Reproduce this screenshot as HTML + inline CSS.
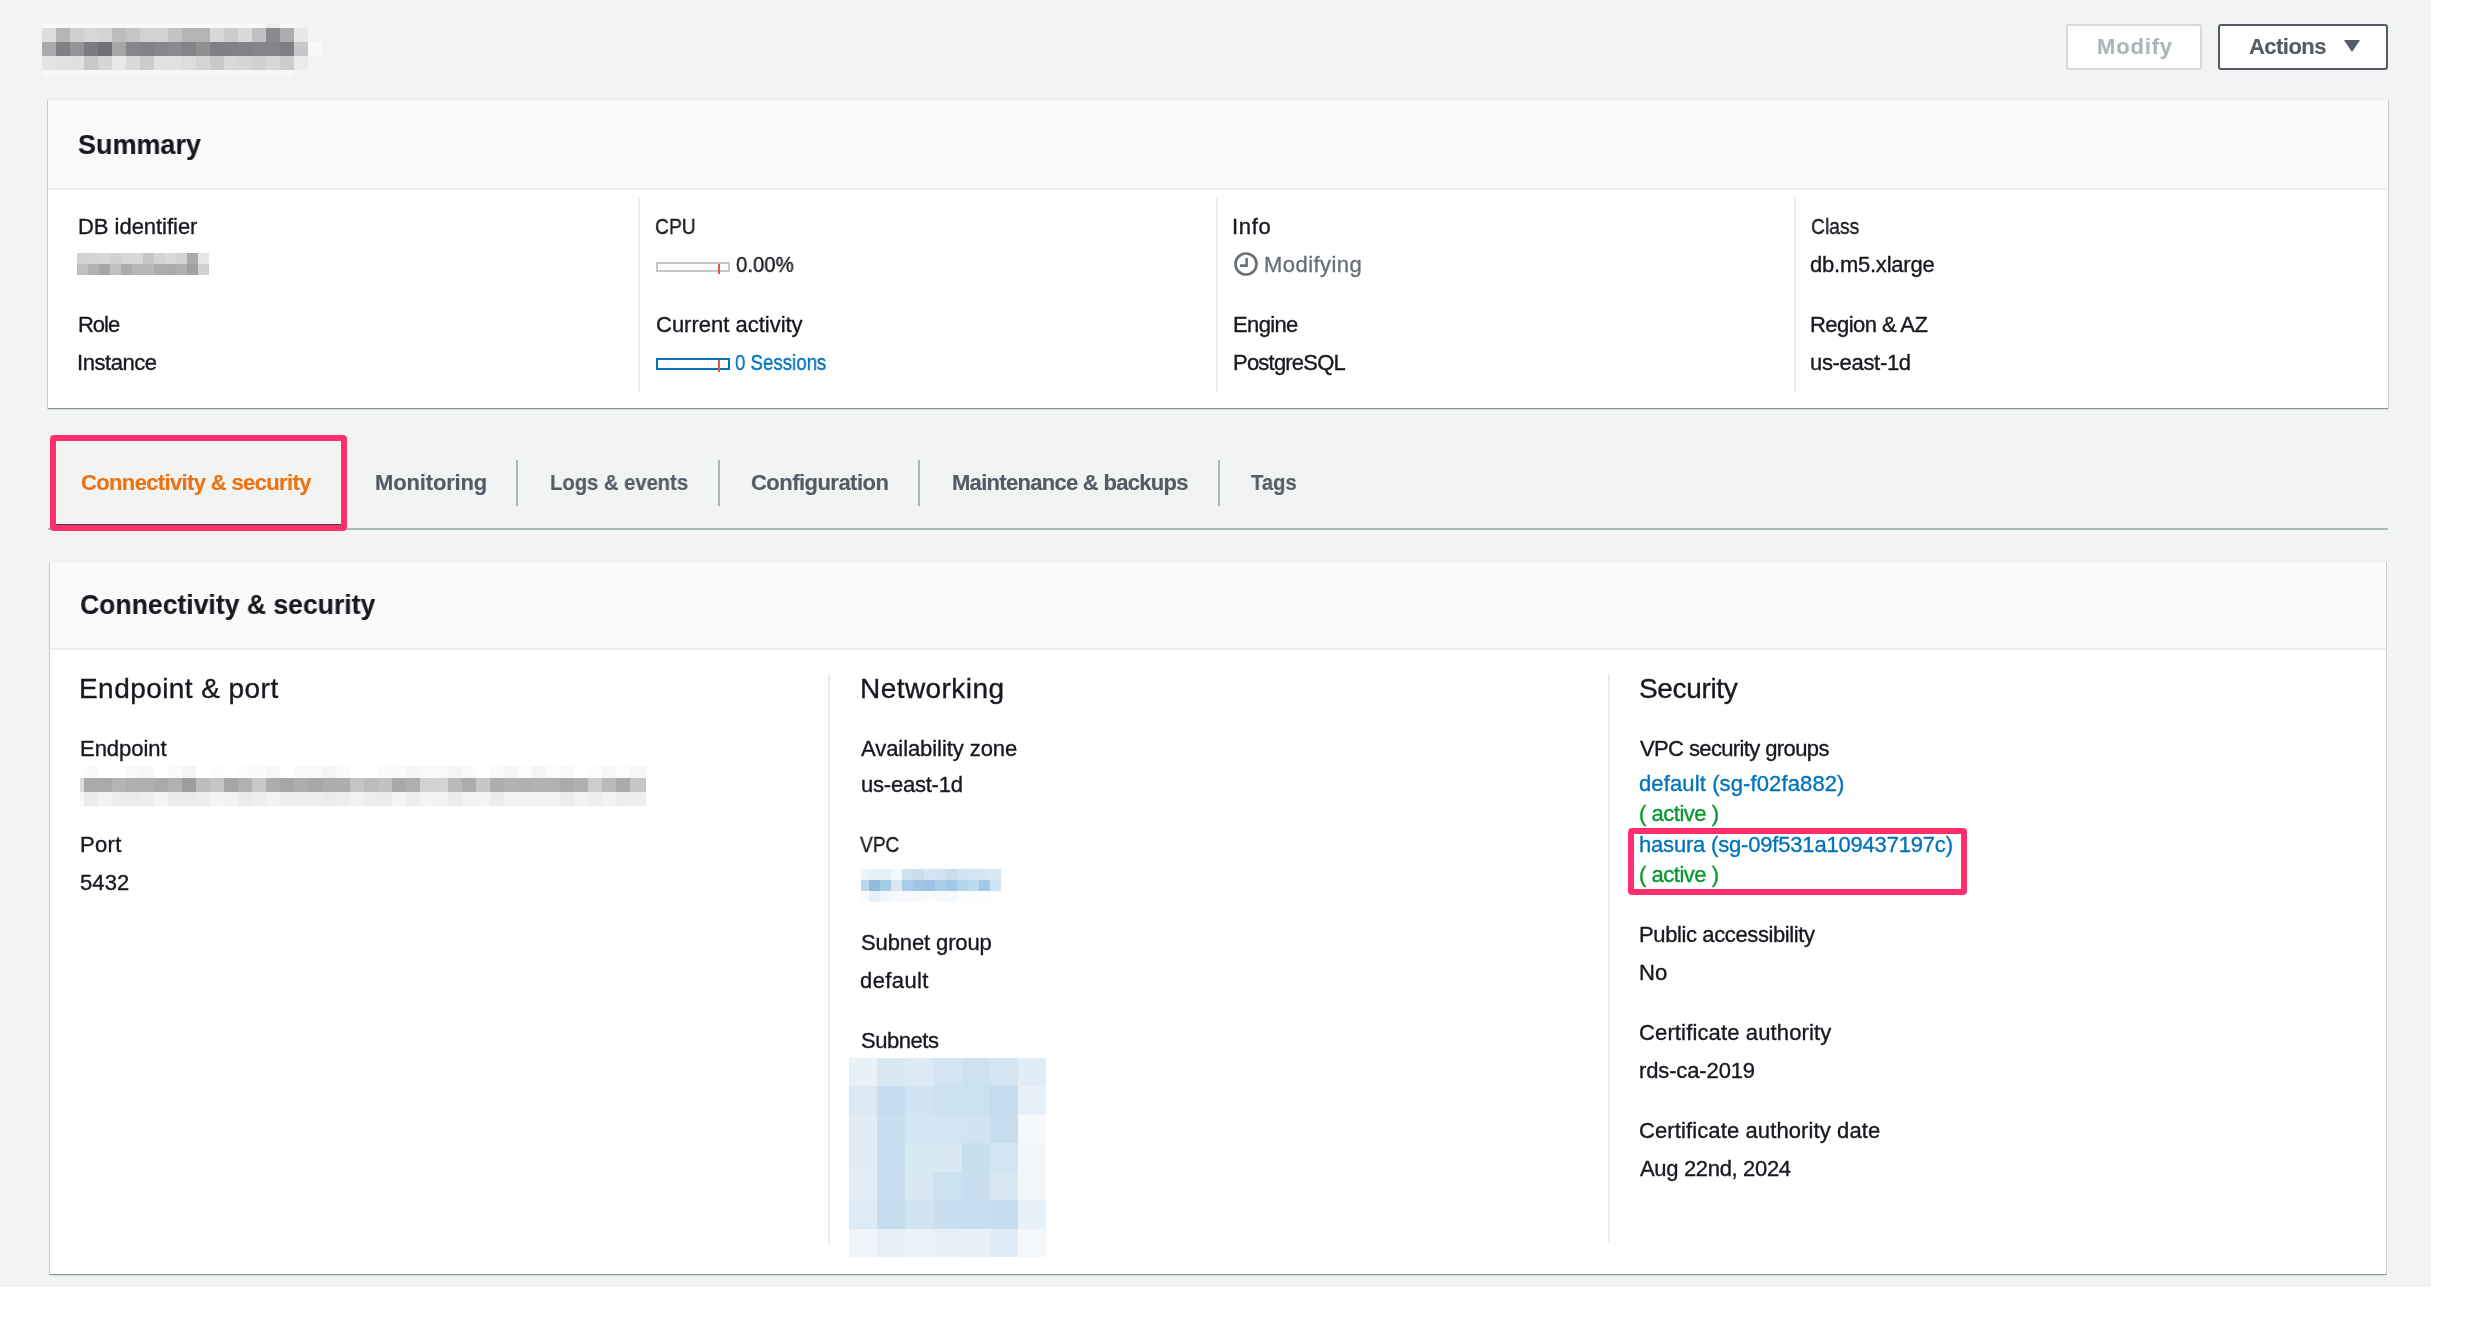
<!DOCTYPE html>
<html><head><meta charset="utf-8"><style>
html,body{margin:0;padding:0;width:2472px;height:1328px;overflow:hidden;background:#fff}
.t{position:absolute;font-family:"Liberation Sans",sans-serif;white-space:nowrap;line-height:90px;will-change:transform}
.a{position:absolute}
</style></head><body>

<div class="a" style="left:0;top:0;width:2431px;height:1287px;background:#f2f3f3"></div>
<!-- buttons -->
<div class="a" style="left:2066px;top:24px;width:132px;height:42px;border:2px solid #d5dbdb;border-radius:3px;background:#fff"></div>
<div class="a" style="left:2218px;top:24px;width:166px;height:42px;border:2px solid #545b64;border-radius:3px;background:#fff"></div>
<svg class="a" style="left:0;top:0" width="2472" height="1328"><polygon points="2344,40 2360,40 2352,52" fill="#545b64"/></svg>
<!-- summary panel -->
<div class="a" style="left:48px;top:99px;width:2340px;height:309px;background:#fff"></div>
<div class="a" style="left:47px;top:100px;width:1px;height:309px;background:#c5cacb"></div>
<div class="a" style="left:2388px;top:100px;width:1px;height:309px;background:#c5cacb"></div>
<div class="a" style="left:48px;top:408px;width:2340px;height:1px;background:#879596"></div>
<div class="a" style="left:48px;top:409px;width:2340px;height:1px;background:#dde0e1"></div>
<div class="a" style="left:48px;top:99px;width:2340px;height:1px;background:#eaeded"></div>
<div class="a" style="left:48px;top:100px;width:2340px;height:88px;background:#fafafa"></div>
<div class="a" style="left:48px;top:188px;width:2340px;height:2px;background:#eaeded"></div>
<div class="a" style="left:638px;top:198px;width:2px;height:194px;background:#eaeded"></div>
<div class="a" style="left:1216px;top:198px;width:2px;height:194px;background:#eaeded"></div>
<div class="a" style="left:1794px;top:198px;width:2px;height:194px;background:#eaeded"></div>
<!-- bars -->
<div class="a" style="left:656px;top:262px;width:70px;height:6px;border:2px solid #c6c8c8"></div>
<div class="a" style="left:718px;top:264px;width:2px;height:10px;background:#e0574f"></div>
<div class="a" style="left:656px;top:358px;width:70px;height:8px;border:2px solid #0073bb"></div>
<div class="a" style="left:718px;top:360px;width:2px;height:12px;background:#e0574f"></div>
<!-- clock icon -->
<svg class="a" style="left:1232px;top:250px" width="28" height="28"><circle cx="14" cy="14" r="10.5" fill="none" stroke="#687078" stroke-width="2.7"/><path d="M14.6 8 V15.6 H8" fill="none" stroke="#687078" stroke-width="2.6"/></svg>
<!-- tabs -->
<div class="a" style="left:48px;top:528px;width:2340px;height:2px;background:#aab7b8"></div>
<div class="a" style="left:516px;top:460px;width:2px;height:46px;background:#aab7b8"></div>
<div class="a" style="left:718px;top:460px;width:2px;height:46px;background:#aab7b8"></div>
<div class="a" style="left:918px;top:460px;width:2px;height:46px;background:#aab7b8"></div>
<div class="a" style="left:1218px;top:460px;width:2px;height:46px;background:#aab7b8"></div>
<!-- connectivity panel -->
<div class="a" style="left:50px;top:561px;width:2336px;height:713px;background:#fff"></div>
<div class="a" style="left:49px;top:562px;width:1px;height:713px;background:#c5cacb"></div>
<div class="a" style="left:2386px;top:562px;width:1px;height:713px;background:#c5cacb"></div>
<div class="a" style="left:50px;top:1274px;width:2336px;height:1px;background:#879596"></div>
<div class="a" style="left:50px;top:1275px;width:2336px;height:1px;background:#dde0e1"></div>
<div class="a" style="left:50px;top:561px;width:2336px;height:1px;background:#eaeded"></div>
<div class="a" style="left:50px;top:562px;width:2336px;height:86px;background:#fafafa"></div>
<div class="a" style="left:50px;top:648px;width:2336px;height:2px;background:#eaeded"></div>
<div class="a" style="left:828px;top:674px;width:2px;height:569px;background:#eaeded"></div>
<div class="a" style="left:1608px;top:674px;width:2px;height:569px;background:#eaeded"></div>
<svg class="a" style="left:0;top:0" width="2472" height="1328" shape-rendering="crispEdges"><rect x="42" y="24" width="14" height="4" fill="#f8f9f9"/><rect x="56" y="24" width="14" height="4" fill="#f8f9f9"/><rect x="70" y="24" width="14" height="4" fill="#f8f9f9"/><rect x="84" y="24" width="14" height="4" fill="#f8f9f9"/><rect x="98" y="24" width="14" height="4" fill="#f8f9f9"/><rect x="112" y="24" width="14" height="4" fill="#f8f9f9"/><rect x="126" y="24" width="14" height="4" fill="#f8f9f9"/><rect x="140" y="24" width="14" height="4" fill="#f8f9f9"/><rect x="154" y="24" width="14" height="4" fill="#f8f9f9"/><rect x="168" y="24" width="14" height="4" fill="#f8f9f9"/><rect x="182" y="24" width="14" height="4" fill="#f8f9f9"/><rect x="196" y="24" width="14" height="4" fill="#f8f9f9"/><rect x="210" y="24" width="14" height="4" fill="#f8f9f9"/><rect x="224" y="24" width="14" height="4" fill="#f8f9f9"/><rect x="238" y="24" width="14" height="4" fill="#f8f9f9"/><rect x="252" y="24" width="14" height="4" fill="#f8f9f9"/><rect x="266" y="24" width="14" height="4" fill="#ededee"/><rect x="280" y="24" width="14" height="4" fill="#f8f9f9"/><rect x="294" y="24" width="14" height="4" fill="#f2f3f3"/><rect x="308" y="24" width="14" height="4" fill="#f2f3f3"/><rect x="42" y="28" width="14" height="14" fill="#dcdede"/><rect x="56" y="28" width="14" height="14" fill="#b5b6b8"/><rect x="70" y="28" width="14" height="14" fill="#cfd0cf"/><rect x="84" y="28" width="14" height="14" fill="#d6d7d8"/><rect x="98" y="28" width="14" height="14" fill="#d4d4d4"/><rect x="112" y="28" width="14" height="14" fill="#bcbdbf"/><rect x="126" y="28" width="14" height="14" fill="#c4c5c7"/><rect x="140" y="28" width="14" height="14" fill="#d1d2d1"/><rect x="154" y="28" width="14" height="14" fill="#d2d3d4"/><rect x="168" y="28" width="14" height="14" fill="#c3c4c5"/><rect x="182" y="28" width="14" height="14" fill="#b3b4b6"/><rect x="196" y="28" width="14" height="14" fill="#b3b4b6"/><rect x="210" y="28" width="14" height="14" fill="#d8d8da"/><rect x="224" y="28" width="14" height="14" fill="#cbcccd"/><rect x="238" y="28" width="14" height="14" fill="#d9dadc"/><rect x="252" y="28" width="14" height="14" fill="#bfc0c2"/><rect x="266" y="28" width="14" height="14" fill="#898b8e"/><rect x="280" y="28" width="14" height="14" fill="#acadaf"/><rect x="294" y="28" width="14" height="14" fill="#e6e7e7"/><rect x="308" y="28" width="14" height="14" fill="#f2f3f3"/><rect x="42" y="42" width="14" height="14" fill="#a9aaac"/><rect x="56" y="42" width="14" height="14" fill="#808185"/><rect x="70" y="42" width="14" height="14" fill="#939496"/><rect x="84" y="42" width="14" height="14" fill="#7b7c7f"/><rect x="98" y="42" width="14" height="14" fill="#6f7074"/><rect x="112" y="42" width="14" height="14" fill="#a5a6a8"/><rect x="126" y="42" width="14" height="14" fill="#86878b"/><rect x="140" y="42" width="14" height="14" fill="#828387"/><rect x="154" y="42" width="14" height="14" fill="#86878a"/><rect x="168" y="42" width="14" height="14" fill="#8b8c8e"/><rect x="182" y="42" width="14" height="14" fill="#838487"/><rect x="196" y="42" width="14" height="14" fill="#8f9092"/><rect x="210" y="42" width="14" height="14" fill="#7f8083"/><rect x="224" y="42" width="14" height="14" fill="#808184"/><rect x="238" y="42" width="14" height="14" fill="#818286"/><rect x="252" y="42" width="14" height="14" fill="#838487"/><rect x="266" y="42" width="14" height="14" fill="#838488"/><rect x="280" y="42" width="14" height="14" fill="#7e7f83"/><rect x="294" y="42" width="14" height="14" fill="#c6c7c9"/><rect x="308" y="42" width="14" height="14" fill="#f8f8f8"/><rect x="42" y="56" width="14" height="14" fill="#e5e5e5"/><rect x="56" y="56" width="14" height="14" fill="#e0e1e1"/><rect x="70" y="56" width="14" height="14" fill="#dfe0e1"/><rect x="84" y="56" width="14" height="14" fill="#c7c8ca"/><rect x="98" y="56" width="14" height="14" fill="#d5d6d8"/><rect x="112" y="56" width="14" height="14" fill="#e9e9ea"/><rect x="126" y="56" width="14" height="14" fill="#dadbdc"/><rect x="140" y="56" width="14" height="14" fill="#cbcccd"/><rect x="154" y="56" width="14" height="14" fill="#e1e2e3"/><rect x="168" y="56" width="14" height="14" fill="#e0e1e1"/><rect x="182" y="56" width="14" height="14" fill="#dcdddd"/><rect x="196" y="56" width="14" height="14" fill="#d3d4d5"/><rect x="210" y="56" width="14" height="14" fill="#c8c9cb"/><rect x="224" y="56" width="14" height="14" fill="#d8d9d9"/><rect x="238" y="56" width="14" height="14" fill="#d6d6d7"/><rect x="252" y="56" width="14" height="14" fill="#d0d1d2"/><rect x="266" y="56" width="14" height="14" fill="#d6d7d9"/><rect x="280" y="56" width="14" height="14" fill="#cbcccc"/><rect x="294" y="56" width="14" height="14" fill="#ebebeb"/><rect x="308" y="56" width="14" height="14" fill="#f2f3f3"/><rect x="42" y="70" width="14" height="8" fill="#f6f7f7"/><rect x="56" y="70" width="14" height="8" fill="#f6f7f7"/><rect x="70" y="70" width="14" height="8" fill="#f6f7f7"/><rect x="84" y="70" width="14" height="8" fill="#f6f7f7"/><rect x="98" y="70" width="14" height="8" fill="#f6f7f7"/><rect x="112" y="70" width="14" height="8" fill="#f6f7f7"/><rect x="126" y="70" width="14" height="8" fill="#f6f7f7"/><rect x="140" y="70" width="14" height="8" fill="#f6f7f7"/><rect x="154" y="70" width="14" height="8" fill="#f6f7f7"/><rect x="168" y="70" width="14" height="8" fill="#f6f7f7"/><rect x="182" y="70" width="14" height="8" fill="#f6f7f7"/><rect x="196" y="70" width="14" height="8" fill="#f6f7f7"/><rect x="210" y="70" width="14" height="8" fill="#f6f7f7"/><rect x="224" y="70" width="14" height="8" fill="#f6f7f7"/><rect x="238" y="70" width="14" height="8" fill="#f6f7f7"/><rect x="252" y="70" width="14" height="8" fill="#f6f7f7"/><rect x="266" y="70" width="14" height="8" fill="#f6f7f7"/><rect x="280" y="70" width="14" height="8" fill="#f6f7f7"/><rect x="294" y="70" width="14" height="8" fill="#f2f3f3"/><rect x="308" y="70" width="14" height="8" fill="#f2f3f3"/><rect x="77" y="253" width="11" height="11" fill="#d2d2d3"/><rect x="88" y="253" width="11" height="11" fill="#d4d4d5"/><rect x="99" y="253" width="11" height="11" fill="#d6d7d9"/><rect x="110" y="253" width="11" height="11" fill="#cfd0d2"/><rect x="121" y="253" width="11" height="11" fill="#d5d6d8"/><rect x="132" y="253" width="11" height="11" fill="#d6d7d9"/><rect x="143" y="253" width="11" height="11" fill="#c6c7c9"/><rect x="154" y="253" width="11" height="11" fill="#d2d3d5"/><rect x="165" y="253" width="11" height="11" fill="#d8d9d9"/><rect x="176" y="253" width="11" height="11" fill="#d3d3d4"/><rect x="187" y="253" width="11" height="11" fill="#aaabad"/><rect x="198" y="253" width="11" height="11" fill="#e6e6e7"/><rect x="77" y="264" width="11" height="11" fill="#bfc0c2"/><rect x="88" y="264" width="11" height="11" fill="#b1b2b4"/><rect x="99" y="264" width="11" height="11" fill="#a6a7a9"/><rect x="110" y="264" width="11" height="11" fill="#bfc0c2"/><rect x="121" y="264" width="11" height="11" fill="#aaabad"/><rect x="132" y="264" width="11" height="11" fill="#b7b8ba"/><rect x="143" y="264" width="11" height="11" fill="#b7b8ba"/><rect x="154" y="264" width="11" height="11" fill="#acadaf"/><rect x="165" y="264" width="11" height="11" fill="#aaabad"/><rect x="176" y="264" width="11" height="11" fill="#afb0b2"/><rect x="187" y="264" width="11" height="11" fill="#a0a1a3"/><rect x="198" y="264" width="11" height="11" fill="#cfd0d2"/><rect x="84" y="766" width="14" height="12" fill="#f9fafa"/><rect x="98" y="766" width="14" height="12" fill="#ffffff"/><rect x="112" y="766" width="14" height="12" fill="#ffffff"/><rect x="126" y="766" width="14" height="12" fill="#f9fafa"/><rect x="140" y="766" width="14" height="12" fill="#f6f7f7"/><rect x="154" y="766" width="14" height="12" fill="#ffffff"/><rect x="168" y="766" width="14" height="12" fill="#fbfbfb"/><rect x="182" y="766" width="14" height="12" fill="#f4f5f5"/><rect x="196" y="766" width="14" height="12" fill="#ffffff"/><rect x="210" y="766" width="14" height="12" fill="#fcfcfc"/><rect x="224" y="766" width="14" height="12" fill="#ffffff"/><rect x="238" y="766" width="14" height="12" fill="#fcfcfc"/><rect x="252" y="766" width="14" height="12" fill="#fbfbfb"/><rect x="266" y="766" width="14" height="12" fill="#f6f7f7"/><rect x="280" y="766" width="14" height="12" fill="#ffffff"/><rect x="294" y="766" width="14" height="12" fill="#f9fafa"/><rect x="308" y="766" width="14" height="12" fill="#f9fafa"/><rect x="322" y="766" width="14" height="12" fill="#f4f5f5"/><rect x="336" y="766" width="14" height="12" fill="#fbfbfb"/><rect x="350" y="766" width="14" height="12" fill="#ffffff"/><rect x="364" y="766" width="14" height="12" fill="#ffffff"/><rect x="378" y="766" width="14" height="12" fill="#fbfbfb"/><rect x="392" y="766" width="14" height="12" fill="#fbfbfb"/><rect x="406" y="766" width="14" height="12" fill="#f4f5f5"/><rect x="420" y="766" width="14" height="12" fill="#f9fafa"/><rect x="434" y="766" width="14" height="12" fill="#f9fafa"/><rect x="448" y="766" width="14" height="12" fill="#f4f5f5"/><rect x="462" y="766" width="14" height="12" fill="#f9fafa"/><rect x="476" y="766" width="14" height="12" fill="#ffffff"/><rect x="490" y="766" width="14" height="12" fill="#fbfbfb"/><rect x="504" y="766" width="14" height="12" fill="#f4f5f5"/><rect x="518" y="766" width="14" height="12" fill="#fcfcfc"/><rect x="532" y="766" width="14" height="12" fill="#f4f5f5"/><rect x="546" y="766" width="14" height="12" fill="#fcfcfc"/><rect x="560" y="766" width="14" height="12" fill="#f9fafa"/><rect x="574" y="766" width="14" height="12" fill="#ffffff"/><rect x="588" y="766" width="14" height="12" fill="#fcfcfc"/><rect x="602" y="766" width="14" height="12" fill="#f6f7f7"/><rect x="616" y="766" width="14" height="12" fill="#fcfcfc"/><rect x="630" y="766" width="16" height="12" fill="#f6f7f7"/><rect x="80" y="778" width="4" height="14" fill="#dcdddd"/><rect x="84" y="778" width="14" height="14" fill="#a9aaac"/><rect x="98" y="778" width="14" height="14" fill="#a9aaac"/><rect x="112" y="778" width="14" height="14" fill="#b3b4b6"/><rect x="126" y="778" width="14" height="14" fill="#afb0b2"/><rect x="140" y="778" width="14" height="14" fill="#afb0b2"/><rect x="154" y="778" width="14" height="14" fill="#a9aaac"/><rect x="168" y="778" width="14" height="14" fill="#b0b1b3"/><rect x="182" y="778" width="14" height="14" fill="#9c9d9f"/><rect x="196" y="778" width="14" height="14" fill="#bbbcbe"/><rect x="210" y="778" width="14" height="14" fill="#c5c6c8"/><rect x="224" y="778" width="14" height="14" fill="#a5a6a8"/><rect x="238" y="778" width="14" height="14" fill="#b0b1b3"/><rect x="252" y="778" width="14" height="14" fill="#c7c8ca"/><rect x="266" y="778" width="14" height="14" fill="#acadaf"/><rect x="280" y="778" width="14" height="14" fill="#a5a6a8"/><rect x="294" y="778" width="14" height="14" fill="#acadaf"/><rect x="308" y="778" width="14" height="14" fill="#a6a7a9"/><rect x="322" y="778" width="14" height="14" fill="#acadaf"/><rect x="336" y="778" width="14" height="14" fill="#acadaf"/><rect x="350" y="778" width="14" height="14" fill="#c4c5c7"/><rect x="364" y="778" width="14" height="14" fill="#bbbcbe"/><rect x="378" y="778" width="14" height="14" fill="#c1c2c4"/><rect x="392" y="778" width="14" height="14" fill="#a8a9ab"/><rect x="406" y="778" width="14" height="14" fill="#aeafb1"/><rect x="420" y="778" width="14" height="14" fill="#d2d2d2"/><rect x="434" y="778" width="14" height="14" fill="#d3d4d6"/><rect x="448" y="778" width="14" height="14" fill="#b8b9bb"/><rect x="462" y="778" width="14" height="14" fill="#abacae"/><rect x="476" y="778" width="14" height="14" fill="#c6c7c9"/><rect x="490" y="778" width="14" height="14" fill="#acadaf"/><rect x="504" y="778" width="14" height="14" fill="#b1b2b4"/><rect x="518" y="778" width="14" height="14" fill="#afb0b2"/><rect x="532" y="778" width="14" height="14" fill="#b1b2b4"/><rect x="546" y="778" width="14" height="14" fill="#b1b2b4"/><rect x="560" y="778" width="14" height="14" fill="#aaabad"/><rect x="574" y="778" width="14" height="14" fill="#afb0b2"/><rect x="588" y="778" width="14" height="14" fill="#cccecd"/><rect x="602" y="778" width="14" height="14" fill="#b9babc"/><rect x="616" y="778" width="14" height="14" fill="#aaabad"/><rect x="630" y="778" width="16" height="14" fill="#c5c6c8"/><rect x="80" y="792" width="4" height="14" fill="#f8f8f8"/><rect x="84" y="792" width="14" height="14" fill="#ebebeb"/><rect x="98" y="792" width="14" height="14" fill="#f2f3f3"/><rect x="112" y="792" width="14" height="14" fill="#eceded"/><rect x="126" y="792" width="14" height="14" fill="#ebebeb"/><rect x="140" y="792" width="14" height="14" fill="#eceded"/><rect x="154" y="792" width="14" height="14" fill="#f4f4f4"/><rect x="168" y="792" width="14" height="14" fill="#ebebeb"/><rect x="182" y="792" width="14" height="14" fill="#ebebeb"/><rect x="196" y="792" width="14" height="14" fill="#eceded"/><rect x="210" y="792" width="14" height="14" fill="#f4f4f4"/><rect x="224" y="792" width="14" height="14" fill="#f2f3f3"/><rect x="238" y="792" width="14" height="14" fill="#ebebeb"/><rect x="252" y="792" width="14" height="14" fill="#eeeeee"/><rect x="266" y="792" width="14" height="14" fill="#f1f2f2"/><rect x="280" y="792" width="14" height="14" fill="#efefef"/><rect x="294" y="792" width="14" height="14" fill="#efefef"/><rect x="308" y="792" width="14" height="14" fill="#eeeeee"/><rect x="322" y="792" width="14" height="14" fill="#ebebeb"/><rect x="336" y="792" width="14" height="14" fill="#eeeeee"/><rect x="350" y="792" width="14" height="14" fill="#f1f2f2"/><rect x="364" y="792" width="14" height="14" fill="#eceded"/><rect x="378" y="792" width="14" height="14" fill="#ebebeb"/><rect x="392" y="792" width="14" height="14" fill="#f4f4f4"/><rect x="406" y="792" width="14" height="14" fill="#eceded"/><rect x="420" y="792" width="14" height="14" fill="#f4f4f4"/><rect x="434" y="792" width="14" height="14" fill="#f1f2f2"/><rect x="448" y="792" width="14" height="14" fill="#ebebeb"/><rect x="462" y="792" width="14" height="14" fill="#f2f3f3"/><rect x="476" y="792" width="14" height="14" fill="#f4f4f4"/><rect x="490" y="792" width="14" height="14" fill="#ebebeb"/><rect x="504" y="792" width="14" height="14" fill="#f2f3f3"/><rect x="518" y="792" width="14" height="14" fill="#f1f2f2"/><rect x="532" y="792" width="14" height="14" fill="#f2f3f3"/><rect x="546" y="792" width="14" height="14" fill="#f2f3f3"/><rect x="560" y="792" width="14" height="14" fill="#ebebeb"/><rect x="574" y="792" width="14" height="14" fill="#f2f3f3"/><rect x="588" y="792" width="14" height="14" fill="#eeeeee"/><rect x="602" y="792" width="14" height="14" fill="#f1f2f2"/><rect x="616" y="792" width="14" height="14" fill="#eceded"/><rect x="630" y="792" width="16" height="14" fill="#efefef"/><rect x="861" y="869" width="8" height="11" fill="#eef3f8"/><rect x="869" y="869" width="11" height="11" fill="#e6f0f8"/><rect x="880" y="869" width="11" height="11" fill="#e8f0f9"/><rect x="891" y="869" width="11" height="11" fill="#f3f7fc"/><rect x="902" y="869" width="11" height="11" fill="#cfe1f0"/><rect x="913" y="869" width="11" height="11" fill="#c8ddef"/><rect x="924" y="869" width="11" height="11" fill="#d4e6f2"/><rect x="935" y="869" width="11" height="11" fill="#d2e4f2"/><rect x="946" y="869" width="11" height="11" fill="#c8ddee"/><rect x="957" y="869" width="11" height="11" fill="#d0e3f1"/><rect x="968" y="869" width="11" height="11" fill="#d3e5f2"/><rect x="979" y="869" width="11" height="11" fill="#d4e6f2"/><rect x="990" y="869" width="11" height="11" fill="#dbe8f4"/><rect x="861" y="880" width="8" height="11" fill="#b9d6ea"/><rect x="869" y="880" width="11" height="11" fill="#8fbde0"/><rect x="880" y="880" width="11" height="11" fill="#a5cbe6"/><rect x="891" y="880" width="11" height="11" fill="#dbe7f3"/><rect x="902" y="880" width="11" height="11" fill="#a9cde7"/><rect x="913" y="880" width="11" height="11" fill="#9fc5e4"/><rect x="924" y="880" width="11" height="11" fill="#9ac2e3"/><rect x="935" y="880" width="11" height="11" fill="#aad0e9"/><rect x="946" y="880" width="11" height="11" fill="#a2c8e5"/><rect x="957" y="880" width="11" height="11" fill="#b3d4eb"/><rect x="968" y="880" width="11" height="11" fill="#bcdaed"/><rect x="979" y="880" width="11" height="11" fill="#a4cbe6"/><rect x="990" y="880" width="11" height="11" fill="#d1e4f3"/><rect x="861" y="891" width="8" height="11" fill="#f7fbfe"/><rect x="869" y="891" width="11" height="11" fill="#e5f0f8"/><rect x="880" y="891" width="11" height="11" fill="#f3f7fc"/><rect x="891" y="891" width="11" height="11" fill="#f7f9fc"/><rect x="902" y="891" width="11" height="11" fill="#f7f9fc"/><rect x="913" y="891" width="11" height="11" fill="#f7fbfe"/><rect x="924" y="891" width="11" height="11" fill="#fafcfb"/><rect x="935" y="891" width="11" height="11" fill="#f5f8fc"/><rect x="946" y="891" width="11" height="11" fill="#f6fafd"/><rect x="957" y="891" width="11" height="11" fill="#fcfdfd"/><rect x="968" y="891" width="11" height="11" fill="#fdfdfd"/><rect x="979" y="891" width="11" height="11" fill="#fdfdfd"/><rect x="990" y="891" width="11" height="11" fill="#fefefe"/><rect x="849.0" y="1058.0" width="28.44" height="28.73" fill="#e8f0f8"/><rect x="877.14" y="1058.0" width="28.44" height="28.73" fill="#d8e8f2"/><rect x="905.28" y="1058.0" width="28.44" height="28.73" fill="#ddeaf5"/><rect x="933.42" y="1058.0" width="28.44" height="28.73" fill="#d3e5f2"/><rect x="961.56" y="1058.0" width="28.44" height="28.73" fill="#cde2f0"/><rect x="989.7" y="1058.0" width="28.44" height="28.73" fill="#d3e5f2"/><rect x="1017.84" y="1058.0" width="28.44" height="28.73" fill="#e0edf6"/><rect x="849.0" y="1086.43" width="28.44" height="28.73" fill="#dbe9f4"/><rect x="877.14" y="1086.43" width="28.44" height="28.73" fill="#c5ddee"/><rect x="905.28" y="1086.43" width="28.44" height="28.73" fill="#d1e4f2"/><rect x="933.42" y="1086.43" width="28.44" height="28.73" fill="#cde2f0"/><rect x="961.56" y="1086.43" width="28.44" height="28.73" fill="#cce1f0"/><rect x="989.7" y="1086.43" width="28.44" height="28.73" fill="#c6ddee"/><rect x="1017.84" y="1086.43" width="28.44" height="28.73" fill="#e8f1f9"/><rect x="849.0" y="1114.86" width="28.44" height="28.73" fill="#e0edf7"/><rect x="877.14" y="1114.86" width="28.44" height="28.73" fill="#c9e0f0"/><rect x="905.28" y="1114.86" width="28.44" height="28.73" fill="#d4e6f3"/><rect x="933.42" y="1114.86" width="28.44" height="28.73" fill="#d2e5f2"/><rect x="961.56" y="1114.86" width="28.44" height="28.73" fill="#d0e4f2"/><rect x="989.7" y="1114.86" width="28.44" height="28.73" fill="#c8ddee"/><rect x="1017.84" y="1114.86" width="28.44" height="28.73" fill="#f7fafd"/><rect x="849.0" y="1143.29" width="28.44" height="28.73" fill="#e0edf7"/><rect x="877.14" y="1143.29" width="28.44" height="28.73" fill="#c9e0f0"/><rect x="905.28" y="1143.29" width="28.44" height="28.73" fill="#d6e8f2"/><rect x="933.42" y="1143.29" width="28.44" height="28.73" fill="#d8e9f3"/><rect x="961.56" y="1143.29" width="28.44" height="28.73" fill="#c8dfef"/><rect x="989.7" y="1143.29" width="28.44" height="28.73" fill="#d2e5f2"/><rect x="1017.84" y="1143.29" width="28.44" height="28.73" fill="#f3f7fc"/><rect x="849.0" y="1171.72" width="28.44" height="28.73" fill="#e1edf7"/><rect x="877.14" y="1171.72" width="28.44" height="28.73" fill="#cae0f0"/><rect x="905.28" y="1171.72" width="28.44" height="28.73" fill="#d7e8f3"/><rect x="933.42" y="1171.72" width="28.44" height="28.73" fill="#cde2f0"/><rect x="961.56" y="1171.72" width="28.44" height="28.73" fill="#c9dfef"/><rect x="989.7" y="1171.72" width="28.44" height="28.73" fill="#d8e8f2"/><rect x="1017.84" y="1171.72" width="28.44" height="28.73" fill="#f1f6fb"/><rect x="849.0" y="1200.15" width="28.44" height="28.73" fill="#dcebf5"/><rect x="877.14" y="1200.15" width="28.44" height="28.73" fill="#c6ddee"/><rect x="905.28" y="1200.15" width="28.44" height="28.73" fill="#d0e4f2"/><rect x="933.42" y="1200.15" width="28.44" height="28.73" fill="#cae0f0"/><rect x="961.56" y="1200.15" width="28.44" height="28.73" fill="#c8deef"/><rect x="989.7" y="1200.15" width="28.44" height="28.73" fill="#c6ddee"/><rect x="1017.84" y="1200.15" width="28.44" height="28.73" fill="#e8f1f9"/><rect x="849.0" y="1228.58" width="28.44" height="28.73" fill="#eff5fb"/><rect x="877.14" y="1228.58" width="28.44" height="28.73" fill="#e4eff8"/><rect x="905.28" y="1228.58" width="28.44" height="28.73" fill="#eaf2f9"/><rect x="933.42" y="1228.58" width="28.44" height="28.73" fill="#e8f1f9"/><rect x="961.56" y="1228.58" width="28.44" height="28.73" fill="#e7f0f8"/><rect x="989.7" y="1228.58" width="28.44" height="28.73" fill="#e0edf6"/><rect x="1017.84" y="1228.58" width="28.44" height="28.73" fill="#f4f8fc"/></svg>

<div class="t" style="left:77.75px;top:99px;font-size:28.5px;font-weight:700;letter-spacing:0.000px;color:#16191f;-webkit-text-stroke:0.15px #16191f;transform:scaleX(0.9467);transform-origin:0 0">Summary</div>
<div class="t" style="left:77.75px;top:182px;font-size:22px;font-weight:400;letter-spacing:-0.034px;color:#16191f;-webkit-text-stroke:0.35px #16191f">DB identifier</div>
<div class="t" style="left:655.10px;top:182px;font-size:22px;font-weight:400;letter-spacing:0.000px;color:#16191f;-webkit-text-stroke:0.35px #16191f;transform:scaleX(0.8765);transform-origin:0 0">CPU</div>
<div class="t" style="left:1231.85px;top:182px;font-size:22px;font-weight:400;letter-spacing:0.699px;color:#16191f;-webkit-text-stroke:0.35px #16191f">Info</div>
<div class="t" style="left:1810.70px;top:182px;font-size:22px;font-weight:400;letter-spacing:0.000px;color:#16191f;-webkit-text-stroke:0.35px #16191f;transform:scaleX(0.8767);transform-origin:0 0">Class</div>
<div class="t" style="left:78.15px;top:280px;font-size:22px;font-weight:400;letter-spacing:-1.042px;color:#16191f;-webkit-text-stroke:0.35px #16191f">Role</div>
<div class="t" style="left:655.55px;top:280px;font-size:22px;font-weight:400;letter-spacing:-0.006px;color:#16191f;-webkit-text-stroke:0.35px #16191f">Current activity</div>
<div class="t" style="left:1232.55px;top:280px;font-size:22px;font-weight:400;letter-spacing:-0.635px;color:#16191f;-webkit-text-stroke:0.35px #16191f">Engine</div>
<div class="t" style="left:1810.15px;top:280px;font-size:22px;font-weight:400;letter-spacing:-0.560px;color:#16191f;-webkit-text-stroke:0.35px #16191f">Region &amp; AZ</div>
<div class="t" style="left:77.45px;top:318px;font-size:22px;font-weight:400;letter-spacing:-0.437px;color:#16191f;-webkit-text-stroke:0.35px #16191f">Instance</div>
<div class="t" style="left:735.85px;top:220px;font-size:22px;font-weight:400;letter-spacing:0.000px;color:#16191f;-webkit-text-stroke:0.35px #16191f;transform:scaleX(0.9266);transform-origin:0 0">0.00%</div>
<div class="t" style="left:735.15px;top:318px;font-size:22px;font-weight:400;letter-spacing:0.000px;color:#0073bb;-webkit-text-stroke:0.35px #0073bb;transform:scaleX(0.8482);transform-origin:0 0">0 Sessions</div>
<div class="t" style="left:1264.40px;top:220px;font-size:22px;font-weight:400;letter-spacing:0.451px;color:#687078;-webkit-text-stroke:0.35px #687078">Modifying</div>
<div class="t" style="left:1232.55px;top:318px;font-size:22px;font-weight:400;letter-spacing:-0.786px;color:#16191f;-webkit-text-stroke:0.35px #16191f">PostgreSQL</div>
<div class="t" style="left:1810.15px;top:220px;font-size:22px;font-weight:400;letter-spacing:-0.233px;color:#16191f;-webkit-text-stroke:0.35px #16191f">db.m5.xlarge</div>
<div class="t" style="left:1810.45px;top:318px;font-size:22px;font-weight:400;letter-spacing:-0.319px;color:#16191f;-webkit-text-stroke:0.35px #16191f">us-east-1d</div>
<div class="t" style="left:2097.10px;top:2px;font-size:22px;font-weight:700;letter-spacing:0.845px;color:#aab7b8;-webkit-text-stroke:0.15px #aab7b8">Modify</div>
<div class="t" style="left:2249.35px;top:2px;font-size:22px;font-weight:700;letter-spacing:-0.530px;color:#545b64;-webkit-text-stroke:0.15px #545b64">Actions</div>
<div class="t" style="left:81.25px;top:438px;font-size:22px;font-weight:700;letter-spacing:-0.643px;color:#ec7211;-webkit-text-stroke:0.15px #ec7211">Connectivity &amp; security</div>
<div class="t" style="left:375.00px;top:438px;font-size:22px;font-weight:700;letter-spacing:-0.147px;color:#545b64;-webkit-text-stroke:0.15px #545b64">Monitoring</div>
<div class="t" style="left:550.40px;top:438px;font-size:22px;font-weight:700;letter-spacing:0.000px;color:#545b64;-webkit-text-stroke:0.15px #545b64;transform:scaleX(0.9179);transform-origin:0 0">Logs &amp; events</div>
<div class="t" style="left:750.85px;top:438px;font-size:22px;font-weight:700;letter-spacing:-0.530px;color:#545b64;-webkit-text-stroke:0.15px #545b64">Configuration</div>
<div class="t" style="left:951.60px;top:438px;font-size:22px;font-weight:700;letter-spacing:-0.712px;color:#545b64;-webkit-text-stroke:0.15px #545b64">Maintenance &amp; backups</div>
<div class="t" style="left:1251.20px;top:438px;font-size:22px;font-weight:700;letter-spacing:0.000px;color:#545b64;-webkit-text-stroke:0.15px #545b64;transform:scaleX(0.9196);transform-origin:0 0">Tags</div>
<div class="t" style="left:80.45px;top:559px;font-size:28.5px;font-weight:700;letter-spacing:0.000px;color:#16191f;-webkit-text-stroke:0.15px #16191f;transform:scaleX(0.9320);transform-origin:0 0">Connectivity &amp; security</div>
<div class="t" style="left:78.55px;top:644px;font-size:28px;font-weight:400;letter-spacing:0.439px;color:#16191f;-webkit-text-stroke:0.35px #16191f">Endpoint &amp; port</div>
<div class="t" style="left:859.95px;top:644px;font-size:28px;font-weight:400;letter-spacing:0.436px;color:#16191f;-webkit-text-stroke:0.35px #16191f">Networking</div>
<div class="t" style="left:1638.80px;top:644px;font-size:28px;font-weight:400;letter-spacing:-0.333px;color:#16191f;-webkit-text-stroke:0.35px #16191f">Security</div>
<div class="t" style="left:79.95px;top:704px;font-size:22px;font-weight:400;letter-spacing:-0.028px;color:#16191f;-webkit-text-stroke:0.35px #16191f">Endpoint</div>
<div class="t" style="left:79.95px;top:800px;font-size:22px;font-weight:400;letter-spacing:0.318px;color:#16191f;-webkit-text-stroke:0.35px #16191f">Port</div>
<div class="t" style="left:79.60px;top:838px;font-size:22px;font-weight:400;letter-spacing:0.111px;color:#16191f;-webkit-text-stroke:0.35px #16191f">5432</div>
<div class="t" style="left:860.70px;top:704px;font-size:22px;font-weight:400;letter-spacing:-0.068px;color:#16191f;-webkit-text-stroke:0.35px #16191f">Availability zone</div>
<div class="t" style="left:860.65px;top:740px;font-size:22px;font-weight:400;letter-spacing:-0.228px;color:#16191f;-webkit-text-stroke:0.35px #16191f">us-east-1d</div>
<div class="t" style="left:860.40px;top:800px;font-size:22px;font-weight:400;letter-spacing:0.000px;color:#16191f;-webkit-text-stroke:0.35px #16191f;transform:scaleX(0.8702);transform-origin:0 0">VPC</div>
<div class="t" style="left:860.60px;top:898px;font-size:22px;font-weight:400;letter-spacing:-0.116px;color:#16191f;-webkit-text-stroke:0.35px #16191f">Subnet group</div>
<div class="t" style="left:860.15px;top:936px;font-size:22px;font-weight:400;letter-spacing:0.402px;color:#16191f;-webkit-text-stroke:0.35px #16191f">default</div>
<div class="t" style="left:860.60px;top:996px;font-size:22px;font-weight:400;letter-spacing:-0.454px;color:#16191f;-webkit-text-stroke:0.35px #16191f">Subnets</div>
<div class="t" style="left:1640.00px;top:704px;font-size:22px;font-weight:400;letter-spacing:-0.618px;color:#16191f;-webkit-text-stroke:0.35px #16191f">VPC security groups</div>
<div class="t" style="left:1638.85px;top:739px;font-size:22px;font-weight:400;letter-spacing:0.120px;color:#0073bb;-webkit-text-stroke:0.35px #0073bb">default (sg-f02fa882)</div>
<div class="t" style="left:1639.14px;top:769px;font-size:22px;font-weight:400;letter-spacing:-0.474px;color:#06972f;-webkit-text-stroke:0.35px #06972f">( active )</div>
<div class="t" style="left:1639.10px;top:800px;font-size:22px;font-weight:400;letter-spacing:-0.187px;color:#0073bb;-webkit-text-stroke:0.35px #0073bb">hasura (sg-09f531a109437197c)</div>
<div class="t" style="left:1639.14px;top:830px;font-size:22px;font-weight:400;letter-spacing:-0.474px;color:#06972f;-webkit-text-stroke:0.35px #06972f">( active )</div>
<div class="t" style="left:1639.35px;top:890px;font-size:22px;font-weight:400;letter-spacing:-0.385px;color:#16191f;-webkit-text-stroke:0.35px #16191f">Public accessibility</div>
<div class="t" style="left:1639.27px;top:928px;font-size:22px;font-weight:400;letter-spacing:0.000px;color:#16191f;-webkit-text-stroke:0.35px #16191f;transform:scaleX(1.0025);transform-origin:0 0">No</div>
<div class="t" style="left:1639.15px;top:988px;font-size:22px;font-weight:400;letter-spacing:0.140px;color:#16191f;-webkit-text-stroke:0.35px #16191f">Certificate authority</div>
<div class="t" style="left:1639.45px;top:1026px;font-size:22px;font-weight:400;letter-spacing:-0.130px;color:#16191f;-webkit-text-stroke:0.35px #16191f">rds-ca-2019</div>
<div class="t" style="left:1639.15px;top:1086px;font-size:22px;font-weight:400;letter-spacing:0.112px;color:#16191f;-webkit-text-stroke:0.35px #16191f">Certificate authority date</div>
<div class="t" style="left:1640.10px;top:1124px;font-size:22px;font-weight:400;letter-spacing:-0.331px;color:#16191f;-webkit-text-stroke:0.35px #16191f">Aug 22nd, 2024</div>

<!-- red highlight boxes -->
<div class="a" style="left:56px;top:524px;width:285px;height:1px;background:#3f3a44"></div>
<div class="a" style="left:50px;top:435px;width:285px;height:84px;border:6px solid #fe2f6c;border-radius:4px"></div>
<div class="a" style="left:1628px;top:828px;width:327px;height:55px;border:6px solid #fe2f6c;border-radius:4px"></div>

</body></html>
